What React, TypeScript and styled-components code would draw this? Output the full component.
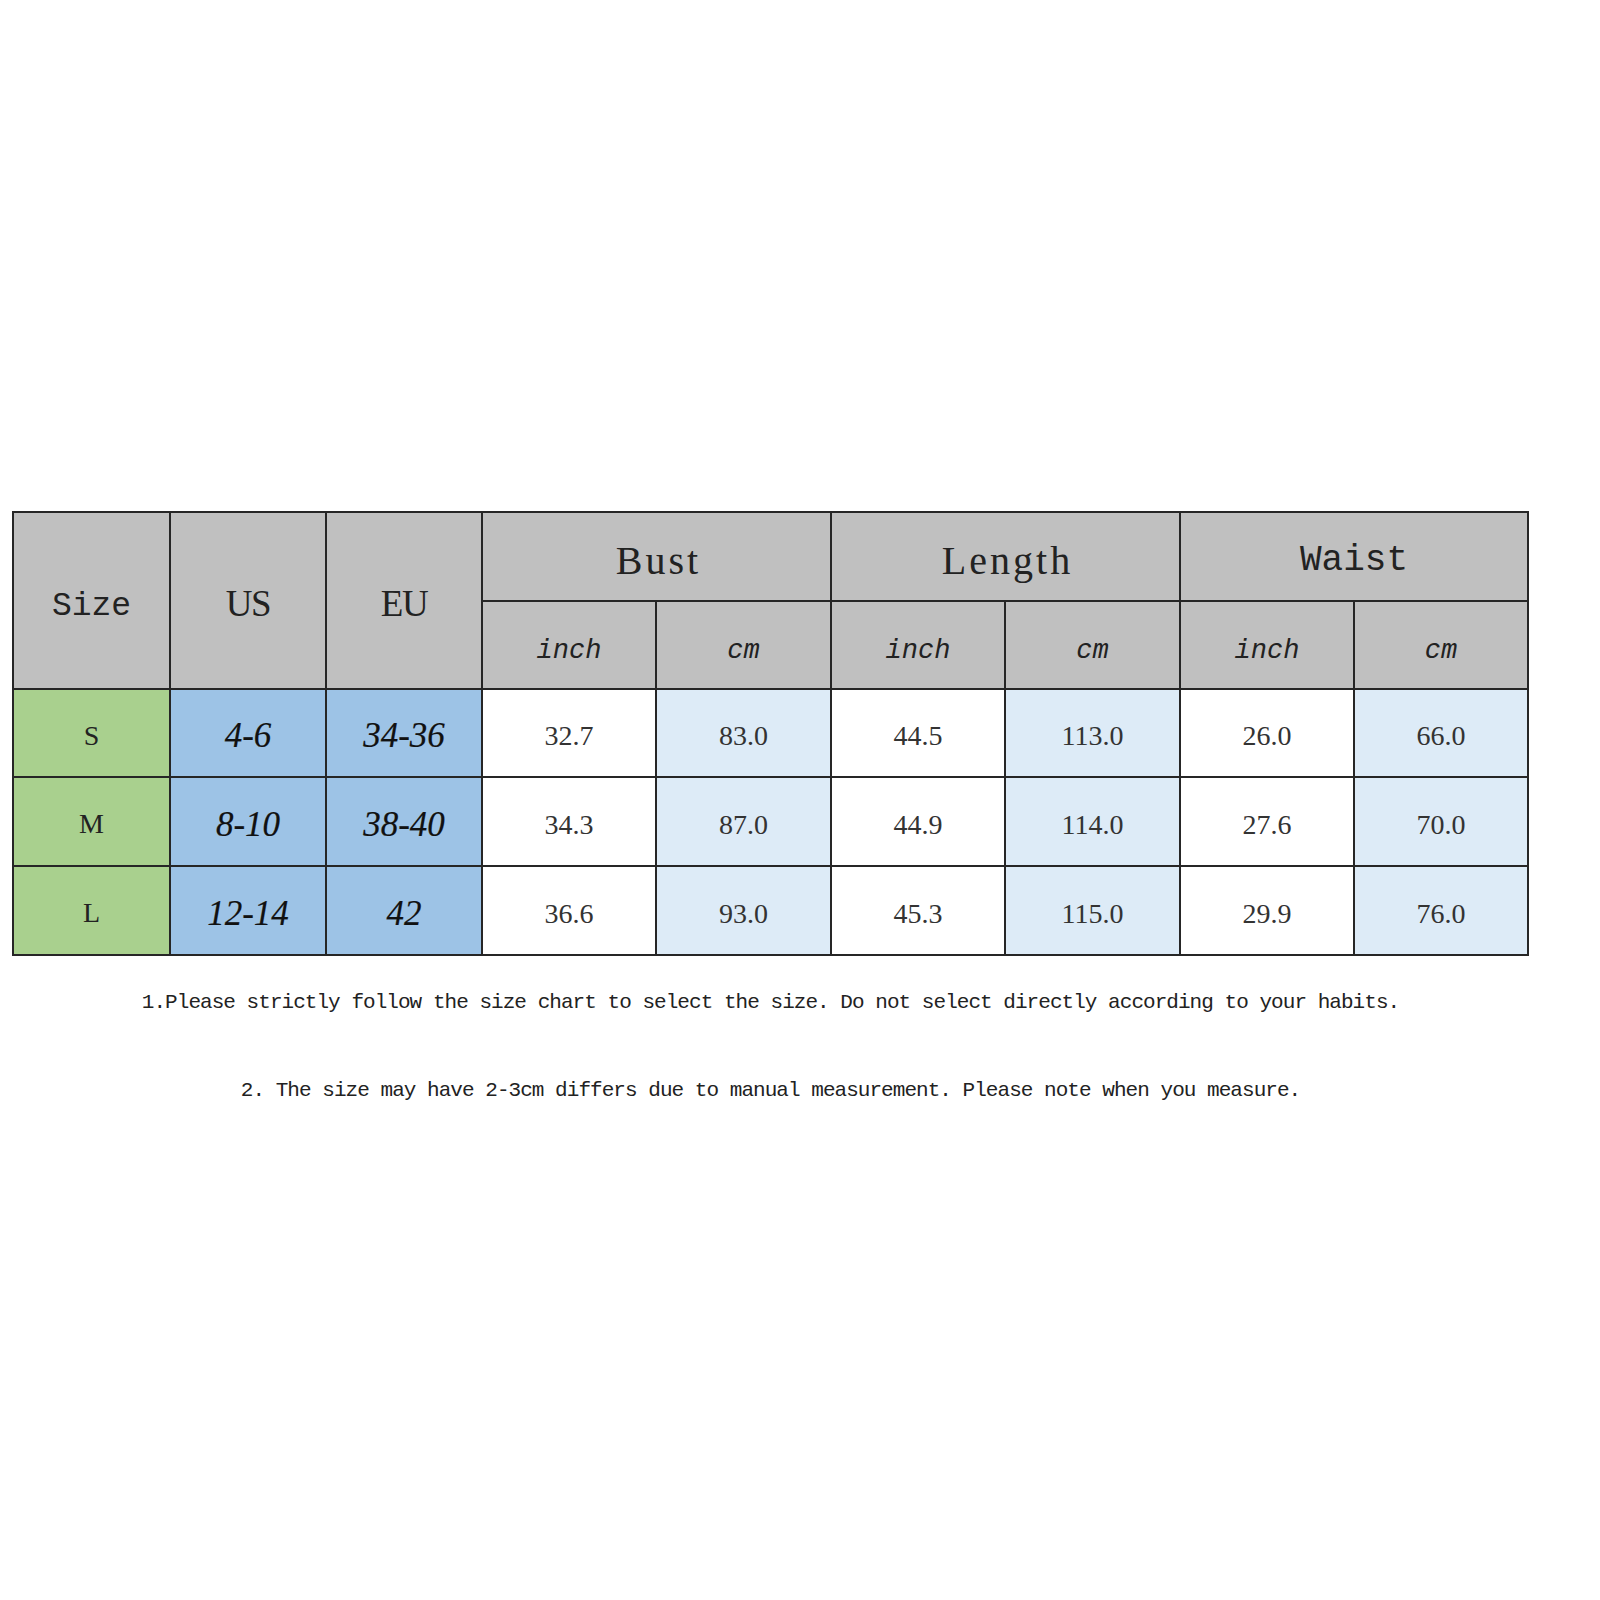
import React from "react";
import styled, { createGlobalStyle, css } from "styled-components";

const GlobalStyle = createGlobalStyle`
  html, body {
    margin: 0;
    padding: 0;
    background: #ffffff;
  }
  body {
    font-family: "Liberation Serif", "Times New Roman", serif;
    color: #222;
  }
`;

const Page = styled.div`
  width: 1600px;
  min-height: 1600px;
  box-sizing: border-box;
  padding: 511px 0 0 12px;
  background: #fff;
`;

const Column = styled.div`
  width: 1517px;
  display: flex;
  flex-direction: column;
  align-items: center;
`;

const Chart = styled.div`
  width: 1517px;
  box-sizing: border-box;
  display: grid;
  grid-template-columns: 155px 154px 154px 172px 173px 172px 173px 172px 172px;
  grid-template-rows: 87px 86px 86px 87px 87px;
  gap: 2px;
  padding: 2px;
  background: #262626;
`;

type Tone = "gray" | "green" | "blue" | "white" | "pale";

const toneColor: Record<Tone, string> = {
  gray: "#c0c0c0",
  green: "#a9d08e",
  blue: "#9dc3e6",
  white: "#ffffff",
  pale: "#ddebf7",
};

const CellBase = styled.div<{ $tone: Tone; $rows?: number; $cols?: number }>`
  background: ${(p) => toneColor[p.$tone]};
  display: flex;
  align-items: center;
  justify-content: center;
  color: #222;
  ${(p) =>
    p.$rows &&
    css`
      grid-row: span ${p.$rows};
    `}
  ${(p) =>
    p.$cols &&
    css`
      grid-column: span ${p.$cols};
    `}
`;

const MonoHead = styled(CellBase)`
  font-family: "Liberation Mono", "Courier New", monospace;
  font-size: 33px;
  padding-top: 11px;
`;

const SerifHead = styled(CellBase)`
  font-family: "Liberation Serif", "Times New Roman", serif;
  font-size: 37px;
  letter-spacing: -1.5px;
  padding-top: 6px;
`;

const GroupHead = styled(CellBase)<{ $mono?: boolean }>`
  font-family: ${(p) =>
    p.$mono
      ? `"Liberation Mono", "Courier New", monospace`
      : `"Liberation Serif", "Times New Roman", serif`};
  font-size: ${(p) => (p.$mono ? "36px" : "40px")};
  letter-spacing: ${(p) => (p.$mono ? "0px" : "3px")};
  padding-top: 8px;
  padding-left: ${(p) => (p.$mono ? "0px" : "4px")};
`;

const UnitHead = styled(CellBase)`
  font-family: "Liberation Mono", "Courier New", monospace;
  font-style: italic;
  font-size: 27px;
  padding-top: 11px;
`;

const SizeCell = styled(CellBase)`
  font-family: "Liberation Serif", "Times New Roman", serif;
  font-size: 28px;
  padding-top: 5px;
`;

const RegionCell = styled(CellBase)`
  font-family: "Liberation Serif", "Times New Roman", serif;
  font-style: italic;
  font-size: 35px;
  color: #111;
  padding-top: 6px;
  -webkit-text-stroke: 0.2px #111;
`;

const ValueCell = styled(CellBase)`
  font-family: "Liberation Serif", "Times New Roman", serif;
  font-size: 28px;
  color: #333;
  padding-top: 6px;
`;

const Notes = styled.div`
  display: flex;
  flex-direction: column;
  align-items: center;
  gap: 64px;
  margin-top: 35px;
`;

const Note = styled.p`
  margin: 0;
  font-family: "Liberation Mono", "Courier New", monospace;
  font-size: 21px;
  letter-spacing: -0.96px;
  line-height: 24px;
  color: #222;
  white-space: pre;
`;

const rows = [
  { size: "S", us: "4-6", eu: "34-36", vals: ["32.7", "83.0", "44.5", "113.0", "26.0", "66.0"] },
  { size: "M", us: "8-10", eu: "38-40", vals: ["34.3", "87.0", "44.9", "114.0", "27.6", "70.0"] },
  { size: "L", us: "12-14", eu: "42", vals: ["36.6", "93.0", "45.3", "115.0", "29.9", "76.0"] },
];

export default function App() {
  return (
    <>
      <GlobalStyle />
      <Page>
        <Column>
          <Chart>
            <MonoHead $tone="gray" $rows={2}>Size</MonoHead>
            <SerifHead $tone="gray" $rows={2}>US</SerifHead>
            <SerifHead $tone="gray" $rows={2}>EU</SerifHead>
            <GroupHead $tone="gray" $cols={2}>Bust</GroupHead>
            <GroupHead $tone="gray" $cols={2}>Length</GroupHead>
            <GroupHead $tone="gray" $cols={2} $mono>Waist</GroupHead>
            {["inch", "cm", "inch", "cm", "inch", "cm"].map((u, i) => (
              <UnitHead key={`u${i}`} $tone="gray">{u}</UnitHead>
            ))}
            {rows.map((r) => (
              <React.Fragment key={r.size}>
                <SizeCell $tone="green">{r.size}</SizeCell>
                <RegionCell $tone="blue">{r.us}</RegionCell>
                <RegionCell $tone="blue">{r.eu}</RegionCell>
                {r.vals.map((v, i) => (
                  <ValueCell key={i} $tone={i % 2 === 0 ? "white" : "pale"}>{v}</ValueCell>
                ))}
              </React.Fragment>
            ))}
          </Chart>
          <Notes>
            <Note>1.Please strictly follow the size chart to select the size. Do not select directly according to your habits.</Note>
            <Note>2. The size may have 2-3cm differs due to manual measurement. Please note when you measure.</Note>
          </Notes>
        </Column>
      </Page>
    </>
  );
}
